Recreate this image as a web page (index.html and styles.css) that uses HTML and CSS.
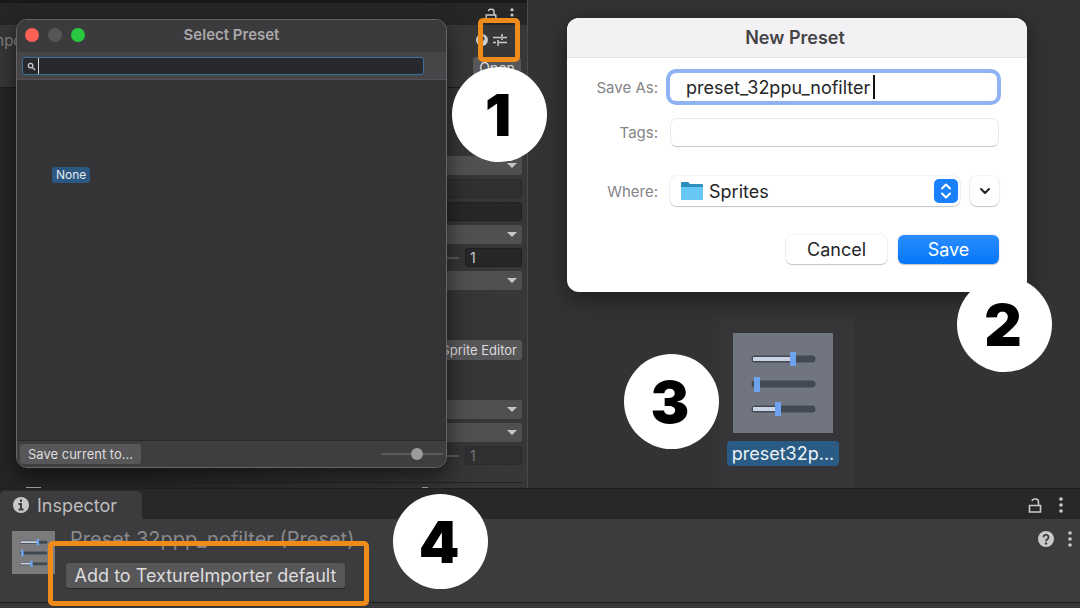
FILE: index.html
```
<!DOCTYPE html>
<html lang="en">
<head>
    <meta charset="utf-8">
    <title>Select Preset</title>
    <meta name="viewport" content="width=device-width, initial-scale=1">
    <link rel="stylesheet" href="styles.css">
</head>
<body>
    <!-- shared symbols -->
    <svg class="defs" width="0" height="0" aria-hidden="true">
        <symbol id="lock" viewBox="0 0 14 16">
            <path d="M1.5 8h11v6.5h-11zM10.5 8V4.5a3 3 0 0 0-3-3h-1a2.500 2.500 0 0 0-2.500 2" fill="none" stroke="currentColor" stroke-width="1.600"/>
        </symbol>
        <symbol id="dots" viewBox="0 0 4 16">
            <circle cx="2" cy="2" r="1.800"/><circle cx="2" cy="8" r="1.800"/><circle cx="2" cy="14" r="1.800"/>
        </symbol>
        <symbol id="help" viewBox="0 0 16 16">
            <circle cx="8" cy="8" r="8"/>
            <path d="M5.500 6.200a2.500 2.500 0 1 1 3.800 2.100Q8 9 8 10.200" fill="none" stroke="#3c3b3d" stroke-width="1.900"/>
            <circle cx="8" cy="12.500" r="1.200" fill="#3c3b3d"/>
        </symbol>
        <symbol id="sliders" viewBox="0 0 100 100">
            <g stroke="#434951" stroke-width="7" stroke-linecap="round">
                <path d="M22 26h57M22 51h57M22 76h57"/>
            </g>
            <path d="M20 26h40M20 76h25" stroke="#cbd3e6" stroke-width="4"/>
            <path d="M60 19v14M24 44v15M45 69v14" stroke="#6ca2ee" stroke-width="6"/>
        </symbol>
    </svg>

    <main class="stage">
        <section class="settings">
            <div class="settings-tabs">
                <svg class="lock"><use href="#lock"/></svg>
                <svg class="dots"><use href="#dots"/></svg>
            </div>
            <div class="settings-head">
                <span class="settings-title">mpo</span>
                <div class="settings-tools">
                    <svg class="help-small"><use href="#help"/></svg>
                    <svg class="preset-icon" viewBox="0 0 14 12"><path d="M0 3.500h8M10 3.500h4M9 0v6M0 8.500h3M6 8.500h8M5 6v6" fill="none" stroke="currentColor" stroke-width="1.500"/></svg>
                </div>
                <button class="btn open">Open</button>
            </div>
            <div class="rows">
                <div class="drop"><select aria-label="Texture type"></select></div>
                <input class="field dim" aria-label="Layer">
                <input class="field" aria-label="Tag">
                <div class="drop"><select aria-label="Mesh type"></select></div>
                <div class="slide"><i></i><input class="field num" value="1" aria-label="Extrude edges"></div>
                <div class="drop"><select aria-label="Pivot"></select></div>
                <button class="btn sprite">Sprite Editor</button>
                <div class="drop"><select aria-label="Wrap mode"></select></div>
                <div class="drop"><select aria-label="Filter mode"></select></div>
                <div class="slide off"><i></i><input class="field num" value="1" aria-label="Aniso level" disabled></div>
                <div class="rows-end"></div>
            </div>
        </section>

        <section class="project">
            <figure class="asset">
                <svg class="asset-icon"><use href="#sliders"/></svg>
                <figcaption>preset32p...</figcaption>
            </figure>
        </section>

        <section class="picker">
            <header class="picker-bar">
                <span class="light red"></span><span class="light gray"></span><span class="light green"></span>
                <h1>Select Preset</h1>
            </header>
            <div class="picker-search">
                <input type="text" aria-label="Search presets">
                <svg viewBox="0 0 10 10"><circle cx="4" cy="4" r="2.500"/><path d="M6 6l3 3"/></svg>
                <span class="caret"></span>
            </div>
            <div class="picker-list"><button class="none">None</button></div>
            <footer class="picker-foot">
                <button class="btn">Save current to...</button>
                <input type="range" min="0" max="100" value="60" aria-label="Icon size">
            </footer>
        </section>

        <form class="dialog">
            <h2>New Preset</h2>
            <div class="dialog-body">
                <label for="saveAs">Save As:</label>
                <div class="name"><input type="text" id="saveAs" value="preset_32ppu_nofilter"><span class="caret"></span></div>
                <label for="tags">Tags:</label>
                <input type="text" id="tags" class="tags">
                <label for="where">Where:</label>
                <div class="where">
                    <div class="where-select">
                        <select id="where"><option>Sprites</option></select>
                        <svg class="folder" viewBox="0 0 22 20"><path d="M0 2q0-1 1-1h6l2 2h12q1 0 1 1v5H0z" fill="#2c8fbd"/><path d="M0 6h22v12q0 1-1 1H1q-1 0-1-1z" fill="#66c7f4"/></svg>
                        <svg class="stepper" viewBox="0 0 24 24"><rect width="24" height="24" rx="5" fill="#1a80fb"/><path d="M8 9.500l4-4 4 4M8 14.500l4 4 4-4" fill="none" stroke="#fff" stroke-width="2" stroke-linecap="round" stroke-linejoin="round"/></svg>
                    </div>
                    <button type="button" class="more" aria-label="Show more"><svg viewBox="0 0 12 8"><path d="M2 2l4 4 4-4" fill="none" stroke="#222" stroke-width="2" stroke-linecap="round" stroke-linejoin="round"/></svg></button>
                </div>
            </div>
            <div class="dialog-actions">
                <button type="button">Cancel</button>
                <button type="button" class="primary">Save</button>
            </div>
        </form>
    </main>

    <section class="inspector">
        <div class="inspector-tabs">
            <div class="tab">
                <svg viewBox="0 0 16 16"><circle cx="8" cy="8" r="8" fill="#c9c8c9"/><path d="M8 2.500v2.500M5.500 7H8v5M5.500 12.500h5" fill="none" stroke="#3c3b3d" stroke-width="2"/></svg>
                Inspector
            </div>
            <div class="tools">
                <svg class="lock"><use href="#lock"/></svg>
                <svg class="dots"><use href="#dots"/></svg>
            </div>
        </div>
        <div class="inspector-body">
            <svg class="preset-thumb"><use href="#sliders"/></svg>
            <div class="preset-info">
                <h3>Preset 32ppp_nofilter (Preset)</h3>
                <button class="btn add">Add to TextureImporter default</button>
            </div>
            <div class="tools">
                <svg class="help"><use href="#help"/></svg>
                <svg class="dots"><use href="#dots"/></svg>
            </div>
        </div>
    </section>

    <!-- step markers -->
    <div class="mark mark-icon"></div>
    <div class="mark mark-add"></div>
    <span class="step step-1">1</span>
    <span class="step step-2">2</span>
    <span class="step step-3">3</span>
    <span class="step step-4">4</span>
</body>
</html>
```
FILE: styles.css
```
* {
    box-sizing: border-box;
}
body {
    margin: 0;
    position: relative;
    min-height: 100vh;
    overflow: hidden;
    display: flex;
    flex-direction: column;
    background: #383739;
    color: #cbcacb;
    font-family: Inter, "Liberation Sans", sans-serif;
    font-size: 13px;
}
h1, h2, h3, figure {
    margin: 0;
}
button, input, select {
    font: inherit;
    color: inherit;
    margin: 0;
    padding: 0;
    border: none;
    outline: none;
}
svg {
    display: block;
    flex: none;
    fill: currentColor;
}
.defs {
    position: absolute;
}
.stage {
    position: relative;
    display: grid;
    grid-template-columns: 528px 1fr;
    height: 488px;
    overflow: hidden;
}
.btn {
    background: #575658;
    border-radius: 3px;
    color: #dddcdd;
}
.lock {
    width: 14px;
    height: 16px;
}
.dots {
    width: 4px;
    height: 16px;
}

/* import settings behind the windows */
.settings {
    background: #373638;
    border-right: 1px solid #4a494b;
}
.settings-tabs {
    display: flex;
    justify-content: flex-end;
    gap: 12px;
    height: 25px;
    padding: 5px 13px 0 0;
    background: #262627;
    border-top: 3px solid #191919;
}
.settings-tabs svg {
    height: 14px;
}
.settings-head {
    display: flex;
    flex-direction: column;
    align-items: flex-end;
    position: relative;
    height: 63px;
    padding: 8px 6px 0 0;
    background: #373738;
    border-bottom: 1px solid #1c1c1d;
}
.settings-title {
    position: absolute;
    left: -9px;
    top: 6px;
    font-size: 15px;
    color: #858485;
}
.settings-tools {
    display: flex;
    align-items: center;
    gap: 5px;
    padding-right: 14px;
    height: 14px;
}
.help-small {
    width: 12px;
    height: 12px;
}
.preset-icon {
    width: 14px;
    height: 12px;
}
.open {
    width: 48px;
    height: 20px;
    margin-top: 10px;
    font-size: 14px;
}
.rows {
    position: relative;
    display: flex;
    flex-direction: column;
    gap: 4px;
    height: 400px;
    padding: 68px 5px 0 300px;
    background: linear-gradient(to right, #252526 25%, #373638 95%);
}
/* tops of the controls that scroll out below */
.rows::before, .rows::after {
    content: "";
    position: absolute;
    bottom: 0;
    height: 1px;
    background: #a3a2a4;
}
.rows::before {
    left: 26px;
    width: 15px;
}
.rows::after {
    left: 422px;
    width: 6px;
}
.drop {
    position: relative;
    height: 19px;
}
.drop select {
    appearance: none;
    display: block;
    width: 100%;
    height: 19px;
    background: #504f51;
    border-radius: 2px;
}
.drop::after {
    content: "";
    position: absolute;
    right: 5px;
    top: 7px;
    border: 5px solid transparent;
    border-top-color: #c8c7c8;
    border-bottom: none;
}
.field {
    height: 19px;
    background: #272628;
    border: 1px solid #1f1e20;
    border-radius: 3px;
}
.field.dim {
    background: #302f31;
    border-color: #29282a;
}
.slide {
    display: flex;
    align-items: center;
    justify-content: flex-end;
    gap: 6px;
}
.slide i {
    width: 40px;
    height: 2px;
    background: #5a595b;
}
.num {
    width: 57px;
    padding-left: 4px;
    font-size: 14px;
}
.off .num {
    background: #302f31;
    border-color: #2a292b;
    color: #777678;
}
.sprite {
    align-self: flex-end;
    width: 91px;
    height: 20px;
    margin: 46px 0 36px;
    padding-right: 5px;
    text-align: right;
}
.rows-end {
    margin-top: 13px;
    margin-left: -300px;
    border-top: 1px solid #222123;
}

/* project panel */
.project {
    padding: 315px 0 0 191px;
    background: #333234;
}
.asset {
    display: flex;
    flex-direction: column;
    align-items: center;
    gap: 8px;
    width: 135px;
    height: 173px;
    padding: 18px 7px 0 0;
    background: #363537;
}
.asset-icon {
    width: 100px;
    height: 100px;
    background: #70757f;
}
.asset figcaption {
    height: 25px;
    padding: 0 5px;
    line-height: 26px;
    border-radius: 4px;
    background: #2a5b84;
    color: #eef2f7;
    font-size: 18px;
}

/* select preset window */
.picker {
    position: absolute;
    left: 16px;
    top: 19px;
    width: 431px;
    height: 449px;
    display: flex;
    flex-direction: column;
    overflow: hidden;
    border: 1px solid #666567;
    border-radius: 11px;
    background: #343335;
    box-shadow: 0 8px 22px rgba(0, 0, 0, 0.55);
}
.picker-bar {
    position: relative;
    display: flex;
    gap: 9px;
    height: 32px;
    padding: 8px;
    background: #3b3a3c;
}
.picker-bar h1 {
    position: absolute;
    left: 0;
    right: 0;
    top: 6px;
    text-align: center;
    font-size: 15px;
    line-height: 18px;
    font-weight: 600;
    color: #a8a7a9;
}
.light {
    width: 14px;
    height: 14px;
    border-radius: 50%;
}
.red {
    background: #fe5f57;
}
.gray {
    background: #565557;
}
.green {
    background: #2ac840;
}
.picker-search {
    position: relative;
    height: 28px;
    padding: 5px 22px 5px 5px;
    background: #464648;
    border-bottom: 1px solid #555058;
}
.picker-search input {
    display: block;
    width: 100%;
    height: 18px;
    padding-left: 18px;
    background: #28292d;
    border: 1px solid #3e6f9c;
    border-radius: 3px;
}
.picker-search svg {
    position: absolute;
    left: 10px;
    top: 10px;
    width: 9px;
    height: 9px;
    fill: none;
    stroke: #c8c7c8;
    stroke-width: 1.5px;
}
.picker-search .caret {
    position: absolute;
    left: 21px;
    top: 6px;
    width: 1px;
    height: 16px;
    background: #ddd;
}
.picker-list {
    flex: 1;
    padding: 87px 35px;
}
.none {
    display: block;
    height: 16px;
    padding: 0 4px;
    line-height: 16px;
    font-size: 12px;
    border-radius: 3px;
    background: #2b5881;
    color: #e3e8ef;
}
.picker-foot {
    display: flex;
    justify-content: space-between;
    align-items: center;
    height: 27px;
    padding: 0 3px;
    background: #3e3d3f;
    border-top: 1px solid #29282a;
}
.picker-foot .btn {
    width: 121px;
    height: 20px;
}
.picker-foot input {
    appearance: none;
    width: 62px;
    height: 12px;
    background: linear-gradient(#5b5a5c, #5b5a5c) center / 100% 2px no-repeat;
}
.picker-foot input::-webkit-slider-thumb {
    appearance: none;
    width: 12px;
    height: 12px;
    border-radius: 50%;
    background: #9b9a9c;
}

/* new preset dialog */
.dialog {
    position: absolute;
    left: 567px;
    top: 18px;
    width: 460px;
    height: 274px;
    overflow: hidden;
    border-radius: 12px;
    background: #fff;
    color: #262527;
    box-shadow: 0 6px 24px rgba(0, 0, 0, 0.45);
}
.dialog h2 {
    height: 40px;
    line-height: 40px;
    padding-right: 4px;
    text-align: center;
    font-size: 18px;
    font-weight: 600;
    color: #454446;
    background: #f3f1f4;
    border-bottom: 1px solid #e2e0e3;
}
.dialog-body {
    display: grid;
    grid-template-columns: 80px 1fr;
    grid-template-rows: 30px 30px 58px;
    row-gap: 15px;
    column-gap: 12px;
    align-items: center;
    padding: 14px 28px 0 11px;
}
.dialog-body label {
    text-align: right;
    font-size: 15px;
    color: #858486;
}
.name {
    position: relative;
    margin-right: 2px;
}
.name input {
    display: block;
    width: 100%;
    height: 28px;
    padding-left: 16px;
    font-size: 18px;
    border-radius: 6px;
    background: #fff;
    box-shadow: 0 0 0 4px #8fb3f2;
}
.name .caret {
    position: absolute;
    left: 203px;
    top: 2px;
    width: 2px;
    height: 24px;
    background: #111;
}
.tags {
    height: 29px;
    background: #fff;
    border: 1px solid #eceaed;
    border-bottom-color: #c9c7ca;
    border-radius: 7px;
}
.where {
    display: flex;
    gap: 10px;
}
.where-select {
    position: relative;
    flex: 1;
}
.where-select select {
    appearance: none;
    display: block;
    width: 100%;
    height: 30px;
    padding-left: 39px;
    font-size: 18px;
    background: #fff;
    border-radius: 7px;
}
.where-select select, .more, .dialog-actions button {
    box-shadow: 0 0 1px 1px rgba(0, 0, 0, 0.05), 0 1px 1px rgba(0, 0, 0, 0.2);
}
.folder {
    position: absolute;
    left: 11px;
    top: 5px;
    width: 22px;
    height: 20px;
}
.stepper {
    position: absolute;
    right: 2px;
    top: 3px;
    width: 24px;
    height: 24px;
}
.more {
    display: grid;
    place-items: center;
    width: 29px;
    height: 30px;
    background: #fff;
    border-radius: 7px;
}
.more svg {
    width: 12px;
    height: 8px;
}
.dialog-actions {
    display: flex;
    justify-content: flex-end;
    gap: 11px;
    padding: 15px 28px 0;
}
.dialog-actions button {
    width: 101px;
    height: 29px;
    font-size: 18px;
    border-radius: 6px;
    background: #fff;
}
.dialog-actions .primary {
    background: linear-gradient(#2a8dff, #0577f8);
    color: #fff;
}

/* inspector */
.inspector-tabs {
    display: flex;
    justify-content: space-between;
    height: 31px;
    padding-top: 2px;
    padding-right: 17px;
    background: #282729;
    border-top: 1px solid #1e1d1f;
}
.tab {
    display: flex;
    align-items: center;
    gap: 8px;
    width: 142px;
    padding-left: 13px;
    font-size: 18px;
    color: #bebdbf;
    background: #3c3b3d;
    border-radius: 5px 5px 0 0;
}
.tab svg {
    width: 16px;
    height: 16px;
}
.tools {
    display: flex;
    align-items: center;
    gap: 17px;
}
.tools .lock {
    height: 17px;
}
.inspector-body {
    display: flex;
    align-items: flex-start;
    height: 84px;
    padding: 12px 8px 0 12px;
    background: #3c3b3d;
    border-bottom: 1px solid #1e1d1f;
}
.preset-thumb {
    width: 43px;
    height: 43px;
    background: #7b7b7d;
}
.preset-info {
    flex: 1;
    padding-left: 11px;
}
.preset-info h3 {
    height: 32px;
    padding-left: 4px;
    line-height: 16px;
    font-size: 20px;
    font-weight: 400;
    color: #8a898b;
}
.add {
    width: 279px;
    height: 25px;
    font-size: 18px;
    box-shadow: 0 1px 1px #2a292b;
}
.inspector-body .tools {
    gap: 14px;
}
.help {
    width: 16px;
    height: 16px;
}

/* numbered steps */
.mark {
    position: absolute;
    border: 5px solid #ef8b1b;
    border-radius: 5px;
}
.mark-icon {
    left: 478px;
    top: 18px;
    width: 42px;
    height: 44px;
}
.mark-add {
    left: 48px;
    top: 541px;
    width: 321px;
    height: 65px;
}
.step {
    position: absolute;
    width: 95px;
    height: 95px;
    padding-right: 3px;
    line-height: 96px;
    text-align: center;
    border-radius: 50%;
    background: #fff;
    color: #000;
    font-size: 58px;
    font-weight: 900;
}
.step-1 {
    left: 452px;
    top: 67px;
}
.step-2 {
    left: 957px;
    top: 277px;
}
.step-3 {
    left: 624px;
    top: 354px;
}
.step-4 {
    left: 393px;
    top: 494px;
}
```
